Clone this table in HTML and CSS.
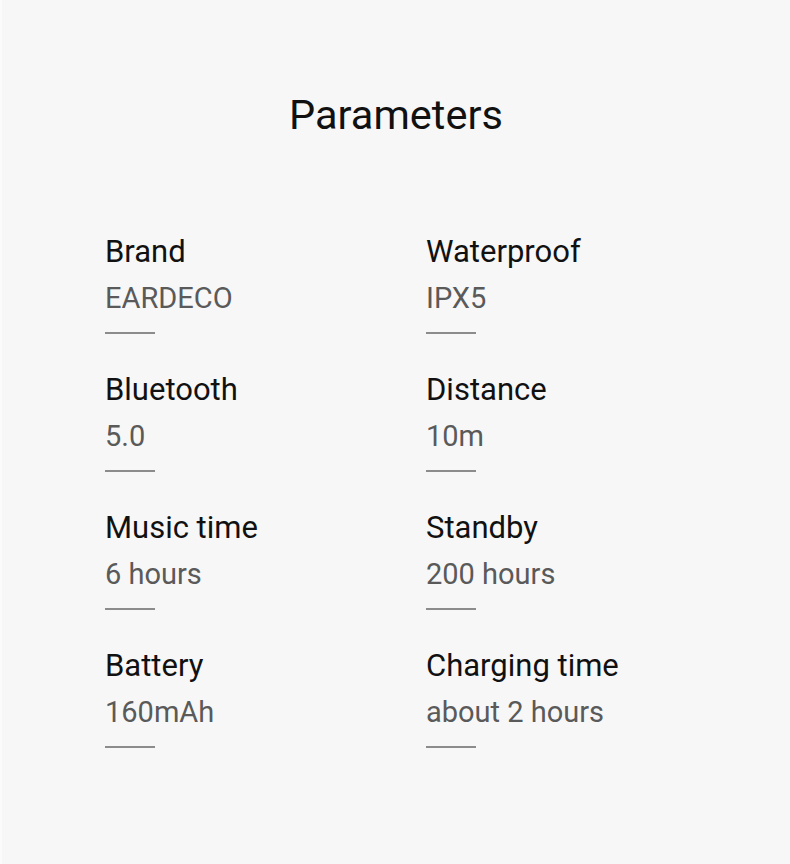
FILE: index.html
```html
<!DOCTYPE html>
<html lang="en">
<head>
<meta charset="utf-8">
<title>Parameters</title>
<link rel="stylesheet" href="styles.css">
</head>
<body>
<main class="page">
  <h1 class="title">Parameters</h1>
  <div class="params">
    <div class="item"><div class="label">Brand</div><div class="value">EARDECO</div><div class="rule"></div></div>
    <div class="item"><div class="label">Waterproof</div><div class="value">IPX5</div><div class="rule"></div></div>
    <div class="item"><div class="label">Bluetooth</div><div class="value">5.0</div><div class="rule"></div></div>
    <div class="item"><div class="label">Distance</div><div class="value">10m</div><div class="rule"></div></div>
    <div class="item"><div class="label">Music time</div><div class="value">6 hours</div><div class="rule"></div></div>
    <div class="item"><div class="label">Standby</div><div class="value">200 hours</div><div class="rule"></div></div>
    <div class="item"><div class="label">Battery</div><div class="value">160mAh</div><div class="rule"></div></div>
    <div class="item"><div class="label">Charging time</div><div class="value">about 2 hours</div><div class="rule"></div></div>
  </div>
</main>
</body>
</html>
```

FILE: styles.css
```css
html, body {
  margin: 0;
  padding: 0;
  background: #f7f7f7;
}
body {
  font-family: Roboto, "Liberation Sans", Arial, sans-serif;
  width: 790px;
  height: 864px;
  overflow: hidden;
}
.page {
  height: 864px;
  box-sizing: border-box;
  border-left: 2px solid #fbfbfb;
  padding-top: 91px;
}
.title {
  margin: 0;
  font-size: 41.5px;
  line-height: 48px;
  font-weight: 400;
  color: #111;
  text-align: center;
}
.params {
  margin-top: 95px;
  margin-left: 103px;
  display: grid;
  grid-template-columns: 321px 321px;
  row-gap: 38px;
}
.label {
  font-size: 31px;
  line-height: 36px;
  color: #111;
}
.value {
  margin-top: 10px;
  font-size: 29px;
  line-height: 36px;
  color: #5a5a5a;
}
.rule {
  margin-top: 16px;
  width: 50px;
  height: 2px;
  background: #8c8c8c;
}
```
